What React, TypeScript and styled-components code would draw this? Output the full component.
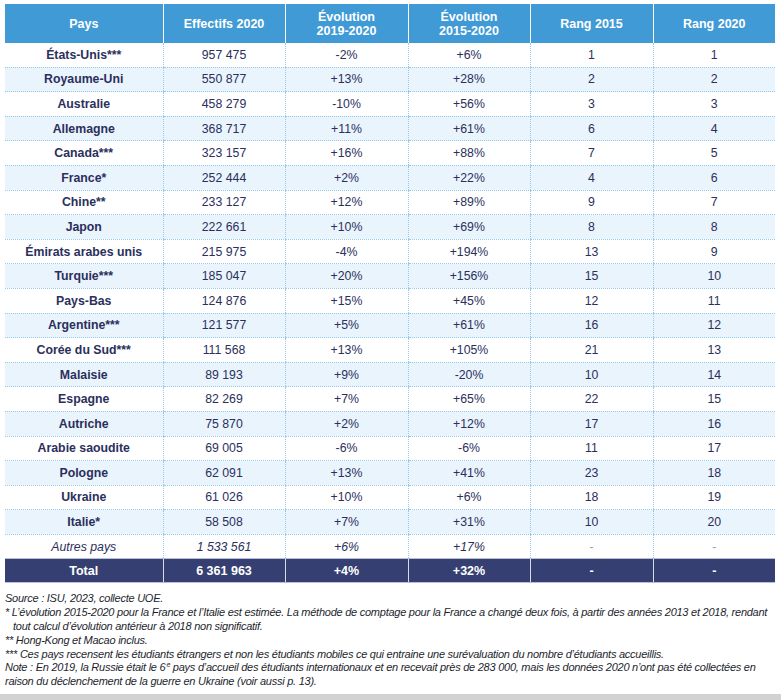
import styled, { createGlobalStyle, css } from 'styled-components';

type Row = {
  pays: string;
  effectif: string;
  evo1: string;
  evo2: string;
  rang15: string;
  rang20: string;
};

const rows: Row[] = [
  { pays: 'États-Unis***', effectif: '957 475', evo1: '-2%', evo2: '+6%', rang15: '1', rang20: '1' },
  { pays: 'Royaume-Uni', effectif: '550 877', evo1: '+13%', evo2: '+28%', rang15: '2', rang20: '2' },
  { pays: 'Australie', effectif: '458 279', evo1: '-10%', evo2: '+56%', rang15: '3', rang20: '3' },
  { pays: 'Allemagne', effectif: '368 717', evo1: '+11%', evo2: '+61%', rang15: '6', rang20: '4' },
  { pays: 'Canada***', effectif: '323 157', evo1: '+16%', evo2: '+88%', rang15: '7', rang20: '5' },
  { pays: 'France*', effectif: '252 444', evo1: '+2%', evo2: '+22%', rang15: '4', rang20: '6' },
  { pays: 'Chine**', effectif: '233 127', evo1: '+12%', evo2: '+89%', rang15: '9', rang20: '7' },
  { pays: 'Japon', effectif: '222 661', evo1: '+10%', evo2: '+69%', rang15: '8', rang20: '8' },
  { pays: 'Émirats arabes unis', effectif: '215 975', evo1: '-4%', evo2: '+194%', rang15: '13', rang20: '9' },
  { pays: 'Turquie***', effectif: '185 047', evo1: '+20%', evo2: '+156%', rang15: '15', rang20: '10' },
  { pays: 'Pays-Bas', effectif: '124 876', evo1: '+15%', evo2: '+45%', rang15: '12', rang20: '11' },
  { pays: 'Argentine***', effectif: '121 577', evo1: '+5%', evo2: '+61%', rang15: '16', rang20: '12' },
  { pays: 'Corée du Sud***', effectif: '111 568', evo1: '+13%', evo2: '+105%', rang15: '21', rang20: '13' },
  { pays: 'Malaisie', effectif: '89 193', evo1: '+9%', evo2: '-20%', rang15: '10', rang20: '14' },
  { pays: 'Espagne', effectif: '82 269', evo1: '+7%', evo2: '+65%', rang15: '22', rang20: '15' },
  { pays: 'Autriche', effectif: '75 870', evo1: '+2%', evo2: '+12%', rang15: '17', rang20: '16' },
  { pays: 'Arabie saoudite', effectif: '69 005', evo1: '-6%', evo2: '-6%', rang15: '11', rang20: '17' },
  { pays: 'Pologne', effectif: '62 091', evo1: '+13%', evo2: '+41%', rang15: '23', rang20: '18' },
  { pays: 'Ukraine', effectif: '61 026', evo1: '+10%', evo2: '+6%', rang15: '18', rang20: '19' },
  { pays: 'Italie*', effectif: '58 508', evo1: '+7%', evo2: '+31%', rang15: '10', rang20: '20' },
];

const GlobalStyle = createGlobalStyle`
  html, body {
    margin: 0;
    padding: 0;
    background: #ffffff;
  }
  body {
    font-family: 'Liberation Sans', Arial, sans-serif;
    color: #2b2f5c;
  }
`;

const Page = styled.div`
  width: 781px;
  height: 700px;
  display: flex;
  flex-direction: column;
  overflow: hidden;
`;

const Content = styled.div`
  flex: 1;
  padding: 4px 6px 0 5px;
`;

const Table = styled.table`
  width: 770px;
  border-collapse: collapse;
  table-layout: fixed;
  font-size: 12px;
`;

const HeadCell = styled.th`
  height: 39px;
  padding: 0;
  background: #3f9ad6;
  color: #ffffff;
  font-weight: bold;
  font-size: 12.5px;
  line-height: 14px;
  text-align: center;
  vertical-align: middle;
  border-left: 1px solid #ffffff;
  &:first-child {
    border-left: none;
  }
`;

const BodyRow = styled.tr<{ $tinted: boolean }>`
  background: ${(p) => (p.$tinted ? '#eaf4fc' : '#ffffff')};
`;

const Cell = styled.td<{ $bold?: boolean; $italic?: boolean }>`
  height: 23.6px;
  padding: 0;
  text-align: center;
  vertical-align: middle;
  color: #2b2f5c;
  font-size: 12.3px;
  font-weight: ${(p) => (p.$bold ? 'bold' : 'normal')};
  font-style: ${(p) => (p.$italic ? 'italic' : 'normal')};
  border-bottom: 1px dotted #94cbee;
  border-left: 1px dotted #94cbee;
  &:first-child {
    border-left: none;
  }
`;

const Dash = styled.span`
  color: #9a9ca8;
  font-style: normal;
`;

const TotalRow = styled.tr`
  background: #353f71;
`;

const TotalCell = styled.td`
  height: 23px;
  padding: 0;
  text-align: center;
  vertical-align: middle;
  color: #ffffff;
  font-weight: bold;
  font-size: 12.5px;
  border-top: 1px solid #b7bfd9;
  border-bottom: 1px solid #b7bfd9;
  border-left: 1px solid #d6dbea;
  &:first-child {
    border-left: none;
  }
`;

const Notes = styled.div`
  margin-top: 9px;
  font-size: 11px;
  line-height: 13.8px;
  font-style: italic;
  color: #1d1f2e;
  letter-spacing: -0.25px;
`;

const Note = styled.p<{ $hanging?: boolean }>`
  margin: 0;
  ${(p) =>
    p.$hanging &&
    css`
      padding-left: 8px;
      text-indent: -8px;
    `}
`;

const Sup = styled.sup`
  font-size: 7px;
  line-height: 0;
  vertical-align: 4px;
  padding-left: 1px;
`;

const BottomBand = styled.div`
  height: 6px;
  background: #d2d2d2;
`;

const colWidths = [158, 122, 123, 122, 123, 122];

export default function App() {
  return (
    <>
      <GlobalStyle />
      <Page>
        <Content>
          <Table>
            <colgroup>
              {colWidths.map((w, i) => (
                <col key={i} style={{ width: w }} />
              ))}
            </colgroup>
            <thead>
              <tr>
                <HeadCell>Pays</HeadCell>
                <HeadCell>Effectifs 2020</HeadCell>
                <HeadCell>
                  Évolution
                  <br />
                  2019-2020
                </HeadCell>
                <HeadCell>
                  Évolution
                  <br />
                  2015-2020
                </HeadCell>
                <HeadCell>Rang 2015</HeadCell>
                <HeadCell>Rang 2020</HeadCell>
              </tr>
            </thead>
            <tbody>
              {rows.map((r, i) => (
                <BodyRow key={r.pays} $tinted={i % 2 === 1}>
                  <Cell $bold>{r.pays}</Cell>
                  <Cell>{r.effectif}</Cell>
                  <Cell>{r.evo1}</Cell>
                  <Cell>{r.evo2}</Cell>
                  <Cell>{r.rang15}</Cell>
                  <Cell>{r.rang20}</Cell>
                </BodyRow>
              ))}
              <BodyRow $tinted={false}>
                <Cell $italic>Autres pays</Cell>
                <Cell $italic>1 533 561</Cell>
                <Cell $italic>+6%</Cell>
                <Cell $italic>+17%</Cell>
                <Cell><Dash>-</Dash></Cell>
                <Cell><Dash>-</Dash></Cell>
              </BodyRow>
              <TotalRow>
                <TotalCell>Total</TotalCell>
                <TotalCell>6 361 963</TotalCell>
                <TotalCell>+4%</TotalCell>
                <TotalCell>+32%</TotalCell>
                <TotalCell>-</TotalCell>
                <TotalCell>-</TotalCell>
              </TotalRow>
            </tbody>
          </Table>
          <Notes>
            <Note>Source : ISU, 2023, collecte UOE.</Note>
            <Note $hanging>
              * L’évolution 2015-2020 pour la France et l’Italie est estimée. La méthode de comptage pour la France a changé deux fois, à partir des années 2013 et 2018, rendant tout calcul d’évolution antérieur à 2018 non significatif.
            </Note>
            <Note>** Hong-Kong et Macao inclus.</Note>
            <Note>*** Ces pays recensent les étudiants étrangers et non les étudiants mobiles ce qui entraine une surévaluation du nombre d’étudiants accueillis.</Note>
            <Note>
              Note : En 2019, la Russie était le 6<Sup>e</Sup> pays d’accueil des étudiants internationaux et en recevait près de 283 000, mais les données 2020 n’ont pas été collectées en raison du déclenchement de la guerre en Ukraine (voir aussi p. 13).
            </Note>
          </Notes>
        </Content>
        <BottomBand />
      </Page>
    </>
  );
}
